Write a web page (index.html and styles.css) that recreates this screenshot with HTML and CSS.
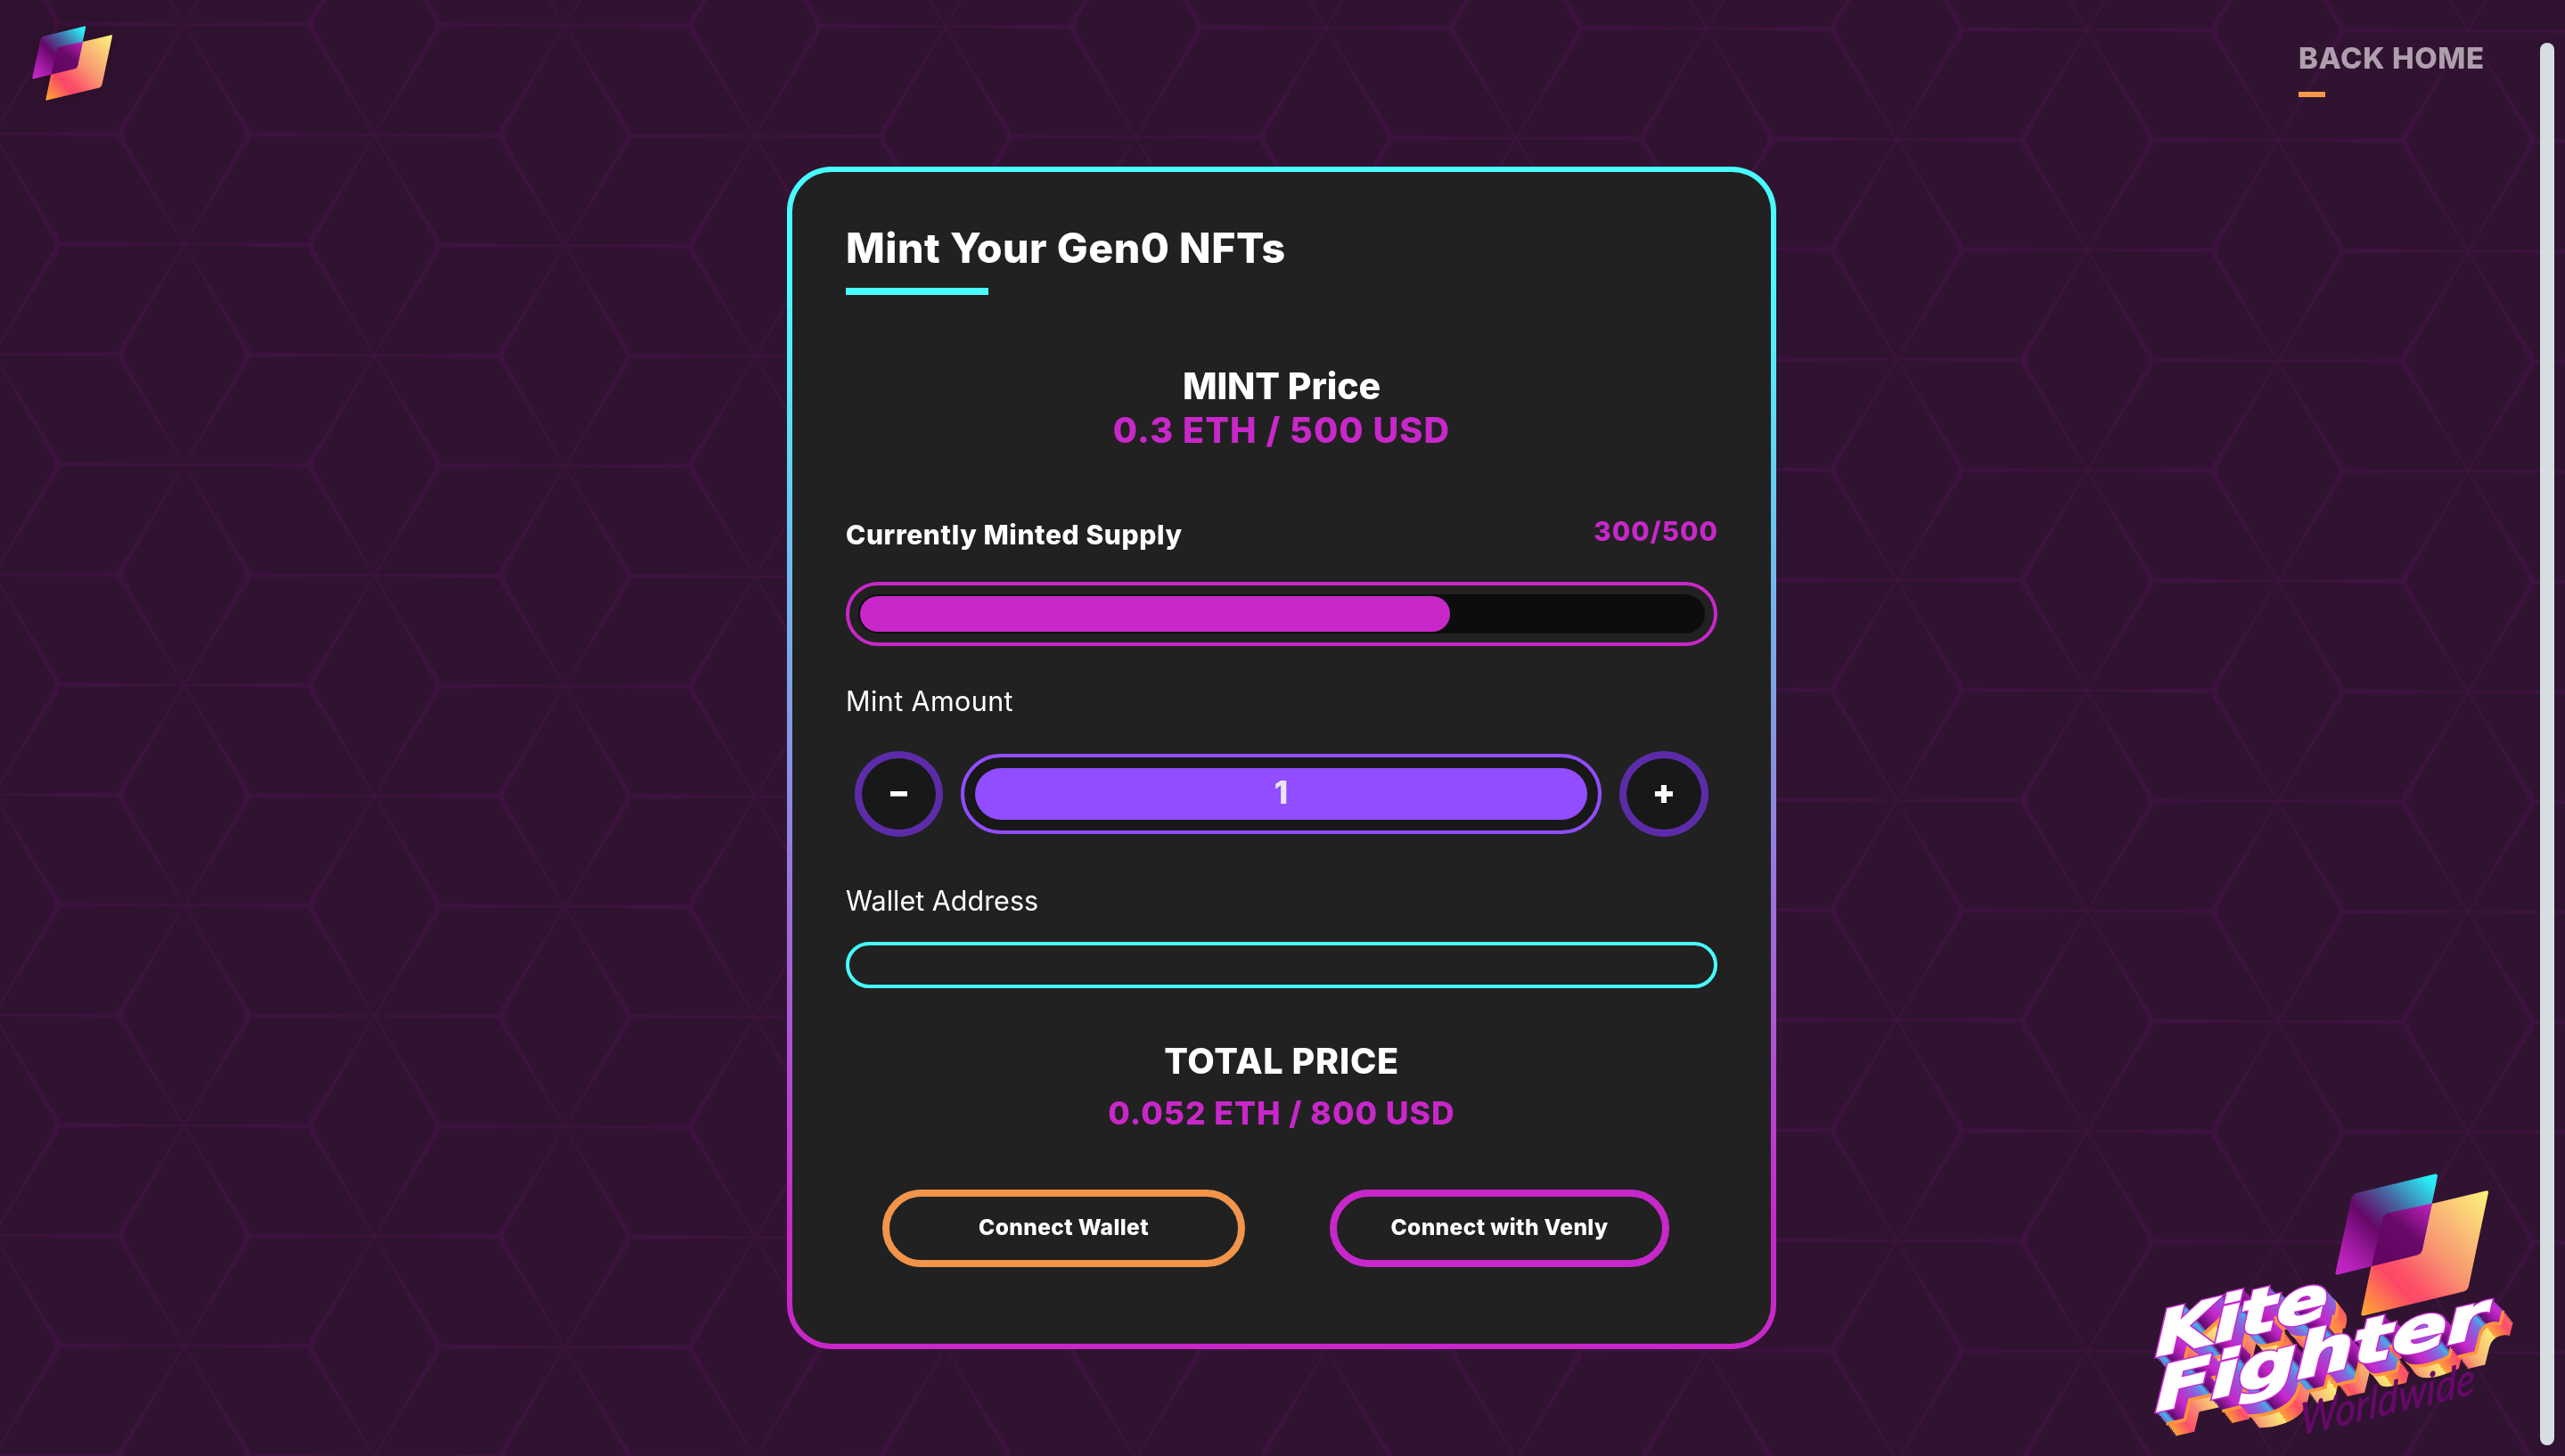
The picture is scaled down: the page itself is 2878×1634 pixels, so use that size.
FILE: index.html
```html
<!DOCTYPE html>
<html lang="en">
<head>
<meta charset="utf-8">
<title>Kite Fighter – Mint Your Gen0 NFTs</title>
<link rel="stylesheet" href="styles.css">
</head>
<body>
<svg class="backdrop" aria-hidden="true">
  <defs>
    <g id="star">
      <path id="ray" d="M0-1.1L137-2.4L142.4-3.6L144.500-2L144 2L142.4 3.6L137 2.4L0 1.1Z"/>
      <use href="#ray" transform="scale(-1 1)"/>
      <g id="diag">
        <path id="d1" d="M-1.200 .6L67-118L67.800-122L71.200-125.500L74.500-123L73-116L1.200-.6Z"/>
        <use href="#d1" transform="scale(-1 1)"/>
      </g>
      <use href="#diag" transform="scale(1 -1)"/>
    </g>
    <pattern id="cubes" width="427.1" height="247.2" patternUnits="userSpaceOnUse" patternTransform="translate(206.6 27.2) skewY(.165)">
      <g fill="#3c133e">
        <use href="#star"/>
        <use href="#star" x="427.1"/>
        <use href="#star" y="247.2"/>
        <use href="#star" x="427.1" y="247.2"/>
        <use href="#star" x="213.55" y="123.6"/>
      </g>
    </pattern>
  </defs>
  <rect width="100%" height="100%" fill="url(#cubes)"/>
</svg>

<header class="topbar">
  <a class="brand" aria-label="Home">
    <svg viewBox="0 0 172 160" width="90" height="84">
      <defs>
        <linearGradient id="cool" gradientUnits="userSpaceOnUse" x1="5" y1="112" x2="112" y2="4">
          <stop offset="0" stop-color="#c626c6"/>
          <stop offset=".12" stop-color="#b420b6"/>
          <stop offset=".43" stop-color="#650868"/>
          <stop offset=".66" stop-color="#46639f"/>
          <stop offset=".95" stop-color="#2aebf6"/>
        </linearGradient>
        <linearGradient id="warm" gradientUnits="userSpaceOnUse" x1="28" y1="158" x2="170" y2="22">
          <stop offset="0" stop-color="#ffad33"/>
          <stop offset=".27" stop-color="#fc4866"/>
          <stop offset=".34" stop-color="#fc5068"/>
          <stop offset=".55" stop-color="#f89271"/>
          <stop offset="1" stop-color="#fbf27a"/>
        </linearGradient>
        <linearGradient id="shade" gradientUnits="userSpaceOnUse" x1="60" y1="92" x2="108" y2="34">
          <stop offset="0" stop-color="#650563"/>
          <stop offset=".45" stop-color="#690969"/>
          <stop offset="1" stop-color="#be24be"/>
        </linearGradient>
        <g id="kites">
          <path fill="url(#warm)" d="M58 46L170 19.200Q172.500 19 172 21.500L150 126Q149 131 144 132.500L32 159.500Q29 160 29.500 157L51 53Q52 48 58 46Z"/>
          <path fill="url(#cool)" d="M24 22L112 .5Q115.500 0 115 3L98 85Q97 90 92 91.500L3 113.500Q0 114 .5 111L18 29Q19 24 24 22Z"/>
          <path fill="url(#shade)" d="M59 44.500L109 33.500L98 85Q97 90 92 91.500L41 104L53 51Q54.500 46 59 44.500Z"/>
        </g>
      </defs>
      <use href="#kites"/>
    </svg>
  </a>
  <nav class="nav"><a class="nav-link">BACK HOME</a></nav>
</header>

<main class="page">
  <section class="card">
    <h1 class="title">Mint Your Gen0 NFTs</h1>
    <div class="title-rule"></div>

    <h2 class="price-label">MINT Price</h2>
    <p class="price">0.3 ETH / 500 USD</p>

    <div class="supply">
      <span class="supply-label">Currently Minted Supply</span>
      <span class="supply-count">300/500</span>
    </div>
    <div class="meter"><div class="track"><div class="fill"></div></div></div>

    <span class="label label-amount">Mint Amount</span>
    <div class="stepper">
      <button class="round minus">–</button>
      <div class="amount"><span class="amount-value">1</span></div>
      <button class="round plus">+</button>
    </div>

    <label class="label label-wallet" for="wallet">Wallet Address</label>
    <input class="wallet" id="wallet" type="text">

    <h2 class="total-label">TOTAL PRICE</h2>
    <p class="total">0.052 ETH / 800 USD</p>

    <div class="actions">
      <button class="btn btn-wallet">Connect Wallet</button>
      <button class="btn btn-venly">Connect with Venly</button>
    </div>
  </section>
</main>

<svg class="wordmark" viewBox="0 0 440 344" width="440" height="344">
  <defs>
    <linearGradient id="side" gradientUnits="userSpaceOnUse" x1="10" y1="0" x2="50" y2="-22" spreadMethod="repeat">
      <stop offset="0" stop-color="#5c0a6c"/>
      <stop offset=".35" stop-color="#c626c9"/>
      <stop offset=".6" stop-color="#a04ad4"/>
      <stop offset=".8" stop-color="#7d72e0"/>
      <stop offset=".93" stop-color="#3fb2ea"/>
      <stop offset="1" stop-color="#7a2a9a"/>
    </linearGradient>
    <linearGradient id="base" gradientUnits="userSpaceOnUse" x1="0" y1="0" x2="58" y2="-12" spreadMethod="repeat">
      <stop offset="0" stop-color="#ffa436"/>
      <stop offset=".3" stop-color="#fc4d68"/>
      <stop offset=".6" stop-color="#f6a873"/>
      <stop offset="1" stop-color="#faea78"/>
    </linearGradient>
    <g id="words" class="words">
      <text transform="translate(19 232) skewY(-13)" textLength="193" lengthAdjust="spacingAndGlyphs">Kite</text>
      <text transform="translate(19 294) skewY(-13)" textLength="371" lengthAdjust="spacingAndGlyphs">Fighter</text>
    </g>
  </defs>
  <use href="#kites" x="220" y="27"/>
  <g fill="url(#base)" stroke="url(#base)" stroke-width="3">
    <use href="#words" x="22.500" y="26"/>
    <use href="#words" x="21" y="24"/>
    <use href="#words" x="19.500" y="22"/>
    <use href="#words" x="18" y="20"/>
    <use href="#words" x="16.500" y="18"/>
    <use href="#words" x="15" y="16"/>
  </g>
  <g fill="#ff9440" stroke="#ff9440" stroke-width="3.500">
    <use href="#words" x="13" y="14"/>
    <use href="#words" x="12" y="13"/>
  </g>
  <g fill="url(#side)" stroke="url(#side)" stroke-width="3">
    <use href="#words" x="10.500" y="11"/>
    <use href="#words" x="9" y="9.500"/>
    <use href="#words" x="7.500" y="8"/>
    <use href="#words" x="6" y="6"/>
    <use href="#words" x="4" y="4"/>
    <use href="#words" x="2" y="2"/>
  </g>
  <use href="#words" fill="#fff" stroke="#c62bd0" stroke-width="5"/>
  <use href="#words" fill="#fff" stroke="#fff" stroke-width="2.200"/>
  <text class="worldwide" transform="translate(181 321) skewY(-13.500)" textLength="196" lengthAdjust="spacingAndGlyphs">Worldwide</text>
</svg>

<div class="scrollbar"></div>
</body>
</html>
```

FILE: styles.css
```css
* { box-sizing: border-box; }

body {
  margin: 0;
  height: 1634px;
  overflow: hidden;
  background: #301330;
  color: #fff;
  font-family: Inter, "Open Sans", sans-serif;
  font-weight: 800;
}

h1, h2, p { margin: 0; font-weight: inherit; }

.backdrop {
  position: fixed;
  inset: 0;
  width: 100%;
  height: 100%;
  z-index: -1;
}

.topbar {
  display: flex;
  justify-content: space-between;
  height: 187px;
  padding: 29px 91px 0 36px;
}

.brand svg {
  display: block;
  filter: drop-shadow(0 0 12px rgba(32, 10, 34, .55));
}

.nav { width: 208px; padding-top: 16px; }

.nav-link {
  display: block;
  color: #ae9eae;
  font-size: 33px;
  line-height: 40px;
  letter-spacing: .6px;
  white-space: nowrap;
}

.nav-link::after {
  content: "";
  display: block;
  width: 30px;
  height: 6px;
  margin-top: 18px;
  background: #f59747;
}

.page {
  display: flex;
  justify-content: center;
  padding-right: 2px;
}

.card {
  display: flex;
  flex-direction: column;
  width: 1110px;
  height: 1327px;
  padding: 55px 60px 0;
  border: 6px solid transparent;
  border-radius: 50px;
  background:
    linear-gradient(#212121, #212121) padding-box,
    linear-gradient(#48fcff 10%, #c827c9 90%) border-box;
}

.title {
  font-size: 46.5px;
  line-height: 60px;
  letter-spacing: .5px;
}

.title-rule {
  width: 160px;
  height: 8px;
  margin-top: 15px;
  background: #48fcff;
}

.price-label, .price, .total-label, .total {
  line-height: 50px;
  text-align: center;
}

.price-label { margin-top: 77px; font-size: 41px; letter-spacing: -.1px; }
.price { color: #c827c9; font-size: 39.5px; letter-spacing: 1.1px; }

.supply {
  display: flex;
  justify-content: space-between;
  height: 44px;
  margin-top: 68px;
  line-height: 40px;
}

.supply-label { align-self: flex-end; font-size: 30px; letter-spacing: .6px; }
.supply-count { margin-right: -1px; color: #c827c9; font-size: 29.5px; letter-spacing: 1.1px; }

.meter {
  height: 72px;
  margin-top: 33px;
  padding: 10px;
  border: 4px solid #c827c9;
  border-radius: 36px;
}

.track {
  height: 44px;
  padding: 2px;
  border-radius: 22px;
  background: #0d0d0d;
}

.fill {
  width: 662px;
  height: 40px;
  border-radius: 20px;
  background: #c827c9;
}

.label {
  font-size: 30.5px;
  font-weight: 400;
  line-height: 40px;
}

.label-amount { margin-top: 42px; letter-spacing: .4px; }
.label-wallet { margin-top: 52px; letter-spacing: 0; }

.stepper {
  display: flex;
  align-items: center;
  gap: 20px;
  height: 96px;
  margin-top: 36px;
  padding: 0 10px;
}

.round {
  width: 99px;
  height: 96px;
  padding: 0 0 6px;
  border: 8px solid #5c2ca8;
  border-radius: 50%;
  background: #181818;
  color: #fff;
  font: 900 38px/60px Inter, sans-serif;
}

.plus { width: 100px; }

.amount {
  flex: 1;
  height: 90px;
  padding: 12px;
  border: 4px solid #914dff;
  border-radius: 45px;
  background: #181818;
}

.amount-value {
  display: block;
  height: 58px;
  border-radius: 29px;
  background: #914dff;
  color: #eae6f0;
  font-size: 35px;
  line-height: 55px;
  text-align: center;
}

.wallet {
  height: 52px;
  margin-top: 26px;
  padding: 0 24px;
  border: 4px solid #48fcff;
  border-radius: 26px;
  background: transparent;
  color: #fff;
  font: 400 26px Inter, sans-serif;
}

.total-label { margin-top: 57px; font-size: 39.5px; letter-spacing: .7px; }
.total { margin-top: 9px; color: #c827c9; font-size: 35.5px; letter-spacing: 1px; }

.actions {
  display: flex;
  gap: 95px;
  margin-top: 60px;
  padding-left: 41px;
}

.btn {
  height: 87px;
  padding: 0 0 3px;
  border: 8px solid;
  border-radius: 44px;
  background: none;
  color: #fff;
  font: 800 24.5px/40px Inter, sans-serif;
  letter-spacing: .4px;
}

.btn-wallet { width: 407px; border-color: #f2944a; }
.btn-venly { width: 381px; border-color: #c827c9; }

.wordmark {
  position: fixed;
  left: 2400px;
  top: 1290px;
}

.words {
  font: italic 700 68px "DejaVu Sans", sans-serif;
}

.worldwide {
  fill: #650a68;
  stroke: #650a68;
  stroke-width: .8;
  font: italic 400 50px Lato, sans-serif;
}

.scrollbar {
  position: fixed;
  top: 48px;
  right: 12px;
  width: 16px;
  height: 1574px;
  border-radius: 8px;
  background: #d6dee1;
}
```
